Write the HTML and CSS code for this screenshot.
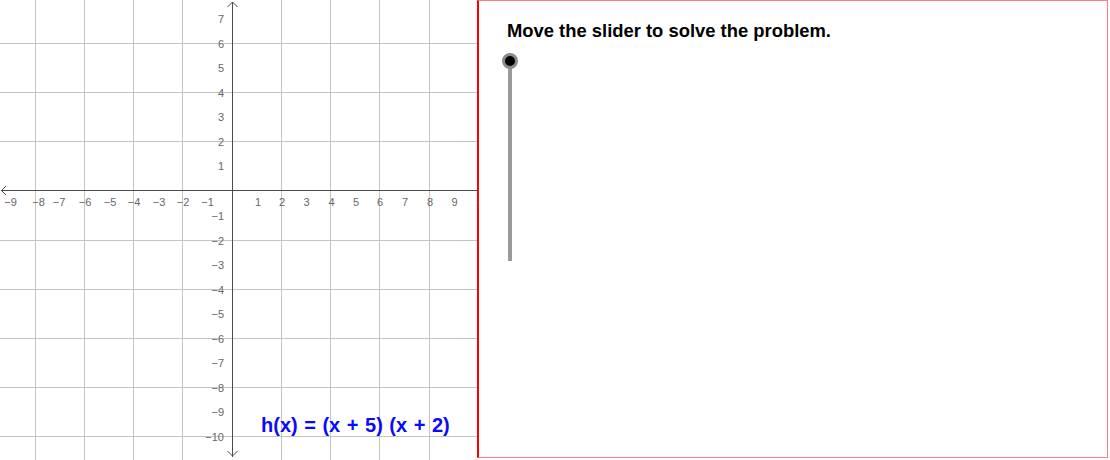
FILE: index.html
```html
<!DOCTYPE html>
<html lang="en">
<head>
<meta charset="utf-8">
<title>Slider problem</title>
<link rel="stylesheet" href="styles.css">
</head>
<body>
<div class="app">
  <div class="graph">
    <svg class="plane" width="477" height="460" viewBox="0 0 477 460" xmlns="http://www.w3.org/2000/svg">
      <g class="grid" shape-rendering="crispEdges">
        <line x1="35.5" y1="0" x2="35.5" y2="460"/>
        <line x1="84.5" y1="0" x2="84.5" y2="460"/>
        <line x1="133.5" y1="0" x2="133.5" y2="460"/>
        <line x1="182.5" y1="0" x2="182.5" y2="460"/>
        <line x1="281.5" y1="0" x2="281.5" y2="460"/>
        <line x1="330.5" y1="0" x2="330.5" y2="460"/>
        <line x1="379.5" y1="0" x2="379.5" y2="460"/>
        <line x1="429.5" y1="0" x2="429.5" y2="460"/>
        <line x1="0" y1="43.5" x2="477" y2="43.5"/>
        <line x1="0" y1="92.5" x2="477" y2="92.5"/>
        <line x1="0" y1="141.5" x2="477" y2="141.5"/>
        <line x1="0" y1="240.5" x2="477" y2="240.5"/>
        <line x1="0" y1="289.5" x2="477" y2="289.5"/>
        <line x1="0" y1="338.5" x2="477" y2="338.5"/>
        <line x1="0" y1="387.5" x2="477" y2="387.5"/>
        <line x1="0" y1="436.5" x2="477" y2="436.5"/>
      </g>
      <g class="axes">
        <line x1="1" y1="190.5" x2="477" y2="190.5" shape-rendering="crispEdges"/>
        <line x1="232.5" y1="2" x2="232.5" y2="457" shape-rendering="crispEdges"/>
        <polyline points="227.5,7 232.5,2 237.5,7"/>
        <polyline points="227.5,451 232.5,456 237.5,451"/>
        <polyline points="6,186 1.5,190.5 6,195"/>
      </g>
      <g class="xlabels">
        <text x="10.5" y="206">−9</text>
        <text x="38.5" y="206">−8</text>
        <text x="59" y="206">−7</text>
        <text x="85" y="206">−6</text>
        <text x="110" y="206">−5</text>
        <text x="134" y="206">−4</text>
        <text x="159" y="206">−3</text>
        <text x="183" y="206">−2</text>
        <text x="207.5" y="206">−1</text>
        <text x="258" y="206">1</text>
        <text x="282" y="206">2</text>
        <text x="306.5" y="206">3</text>
        <text x="331.5" y="206">4</text>
        <text x="356" y="206">5</text>
        <text x="380" y="206">6</text>
        <text x="405" y="206">7</text>
        <text x="430" y="206">8</text>
        <text x="454.5" y="206">9</text>
        <text x="482" y="206">10</text>
      </g>
      <g class="ylabels">
        <text x="224" y="23">7</text>
        <text x="224" y="47.5">6</text>
        <text x="224" y="72">5</text>
        <text x="224" y="96.5">4</text>
        <text x="224" y="121">3</text>
        <text x="224" y="145.5">2</text>
        <text x="224" y="170">1</text>
        <text x="224" y="220">−1</text>
        <text x="224" y="244.5">−2</text>
        <text x="224" y="269">−3</text>
        <text x="224" y="293.5">−4</text>
        <text x="224" y="318">−5</text>
        <text x="224" y="342.5">−6</text>
        <text x="224" y="367">−7</text>
        <text x="224" y="391.5">−8</text>
        <text x="224" y="416">−9</text>
        <text x="224" y="441">−10</text>
      </g>
      <text class="formula" x="261" y="432">h(x) = (x + 5) (x + 2)</text>
    </svg>
  </div>
  <div class="panel">
    <p class="prompt">Move the slider to solve the problem.</p>
    <div class="slider">
      <div class="track"></div>
      <div class="knob"></div>
    </div>
  </div>
</div>
</body>
</html>
```

FILE: styles.css
```css
html, body {
  margin: 0;
  padding: 0;
  background: #ffffff;
}

body {
  font-family: "Liberation Sans", Arial, sans-serif;
}

.app {
  display: flex;
  width: 1110px;
  height: 460px;
}

.graph {
  width: 477px;
  height: 460px;
  flex: none;
  overflow: hidden;
}

.plane {
  display: block;
}

.grid line {
  stroke: #c4c4c4;
  stroke-width: 1;
}

.axes line,
.axes polyline {
  stroke: #4a4a4a;
  stroke-width: 1;
  fill: none;
}

.xlabels text,
.ylabels text {
  font-family: "Liberation Sans", Arial, sans-serif;
  font-size: 11px;
  fill: #666666;
}

.xlabels text {
  text-anchor: middle;
}

.ylabels text {
  text-anchor: end;
}

.formula {
  font-family: "Liberation Sans", Arial, sans-serif;
  font-weight: bold;
  font-size: 20px;
  word-spacing: 1px;
  fill: #0a0aff;
}

.panel {
  box-sizing: border-box;
  width: 631px;
  height: 458px;
  flex: none;
  border-left: 2px solid #ff0000;
  border-top: 1px solid #ff8080;
  border-right: 1px solid #ff8080;
  border-bottom: 1px solid #ff8080;
  padding: 20px 0 0 28px;
  display: flex;
  flex-direction: column;
  align-items: flex-start;
}

.prompt {
  margin: 0;
  font-size: 18.4px;
  line-height: 20px;
  font-weight: bold;
  color: #000000;
}

.slider {
  position: relative;
  width: 16px;
  margin-top: 12px;
  margin-left: -5px;
}

.track {
  width: 4px;
  height: 200px;
  margin-left: 6px;
  margin-top: 8px;
  background: #9a9a9a;
}

.knob {
  position: absolute;
  top: 0;
  left: 0;
  box-sizing: border-box;
  width: 16px;
  height: 16px;
  border-radius: 50%;
  border: 3px solid #8c8c8c;
  background: #000000;
}
```
